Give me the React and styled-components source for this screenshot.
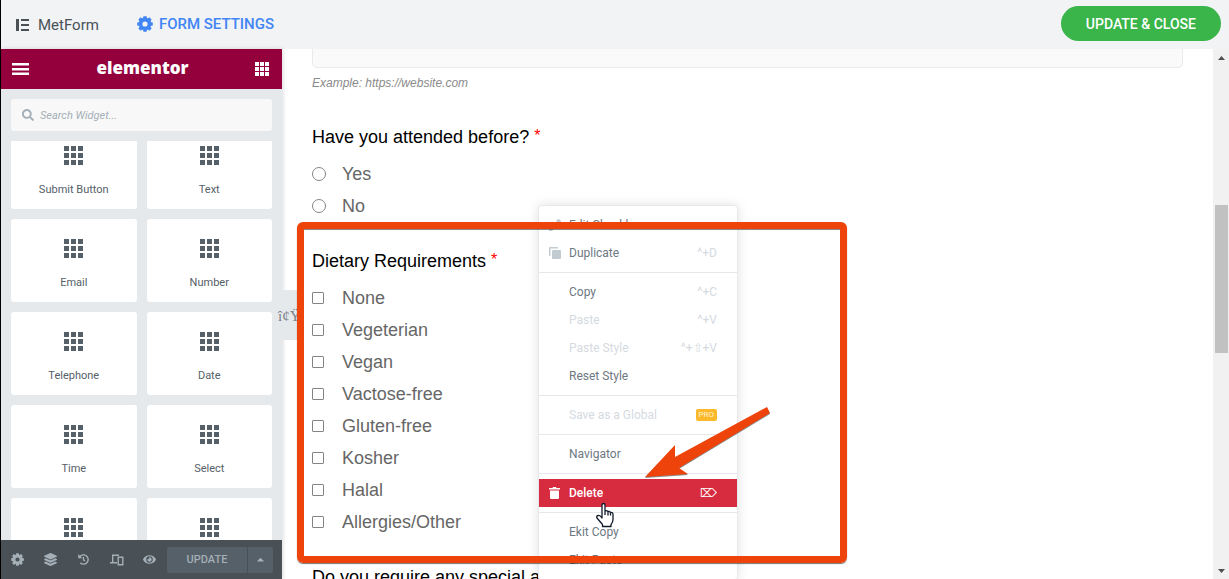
import React from "react";
import styled, { createGlobalStyle, css } from "styled-components";
import { FaHistory, FaEye, FaSearch, FaLayerGroup, FaCaretUp } from "react-icons/fa";

const GlobalStyle = createGlobalStyle`
  * { box-sizing: border-box; }
  body { margin: 0; background: #fff; }
  button, input { font: inherit; }
`;

const ui = `Roboto, "Liberation Sans", sans-serif`;

const Page = styled.div`
  position: relative;
  display: flex;
  flex-direction: column;
  height: 100vh;
  overflow: hidden;
  border-left: 1px solid #000;
  font-family: ${ui};
`;

const TopBar = styled.header`
  flex: none;
  display: flex;
  align-items: center;
  height: 49px;
  padding: 0 8px 2px 15px;
  background: #f1f3f5;
`;

const Brand = styled.div`
  display: flex;
  align-items: center;
  gap: 8px;
  padding-top: 2px;
  font-size: 15px;
  line-height: 20px;
  color: #495157;
`;

const SettingsLink = styled.a`
  display: flex;
  align-items: center;
  gap: 6px;
  margin-left: 38px;
  font-size: 15px;
  line-height: 20px;
  font-weight: 500;
  color: #4285f4;
  text-decoration: none;
`;

const CloseButton = styled.button`
  margin-left: auto;
  height: 35px;
  padding: 0 25px;
  border: 0;
  border-radius: 18px;
  background: #39b54a;
  color: #fff;
  font-size: 14px;
  font-weight: 500;
`;

const Workspace = styled.div`
  flex: 1;
  display: flex;
  min-height: 0;
`;

const Panel = styled.aside`
  position: relative;
  z-index: 1;
  flex: none;
  display: flex;
  flex-direction: column;
  width: 281px;
  background: #e6e9ec;
  box-shadow: 1px 0 4px rgba(0, 0, 0, 0.15);
`;

const PanelHeader = styled.div`
  flex: none;
  display: flex;
  align-items: center;
  justify-content: space-between;
  height: 40px;
  padding: 0 13px 0 11px;
  background: #93003c;
`;

const Logo = styled.span`
  color: #fff;
  font-family: "Open Sans", "Noto Sans", sans-serif;
  font-size: 17px;
  line-height: 24px;
  padding-bottom: 2px;
  font-weight: 800;
`;

const IconButton = styled.button`
  display: flex;
  align-items: center;
  justify-content: center;
  padding: 0;
  border: 0;
  background: none;
  color: ${(p) => p.$color || "#fff"};
`;

const SearchBox = styled.label`
  flex: none;
  display: flex;
  align-items: center;
  gap: 6px;
  height: 32px;
  margin: 10px;
  padding: 0 11px;
  border-radius: 3px;
  background: #f8f8f8;
  color: #a4afb7;
  font-size: 12px;
`;

const SearchInput = styled.input`
  flex: 1;
  min-width: 0;
  padding: 0;
  border: 0;
  outline: 0;
  background: none;
  font-size: 11px;
  font-style: italic;
  &::placeholder { color: #a4afb7; opacity: 1; }
`;

const WidgetScroll = styled.div`
  flex: 1;
  min-height: 0;
  overflow: hidden;
  padding: 0 10px;
`;

const WidgetGrid = styled.div`
  display: grid;
  grid-template-columns: 1fr 1fr;
  gap: 10px;
  margin-top: -15px;
`;

const Widget = styled.button`
  display: flex;
  flex-direction: column;
  align-items: center;
  gap: 18px;
  height: 83px;
  padding: 20px 0 0;
  border: 0;
  border-radius: 3px;
  background: #fff;
  color: #556068;
  font-size: 11px;
  line-height: 14px;
`;

const PanelFooter = styled.div`
  flex: none;
  display: flex;
  align-items: center;
  height: 39px;
  padding-right: 9px;
  background: #495157;
`;

const FooterButton = styled(IconButton)`
  width: 33px;
  height: 39px;
  font-size: 12px;
`;

const UpdateButton = styled.button`
  flex: ${(p) => (p.$narrow ? "0 0 25px" : "1")};
  display: flex;
  align-items: center;
  justify-content: center;
  height: 26px;
  margin-left: 1px;
  padding: 0;
  border: 0;
  border-radius: ${(p) => (p.$narrow ? "0 2px 2px 0" : "2px 0 0 2px")};
  background: #556068;
  color: #a4afb7;
  font-size: 11px;
  font-weight: 500;
`;

const Toggle = styled.button`
  position: absolute;
  top: 241px;
  left: 275px;
  width: 24px;
  height: 50px;
  padding: 2px 2px 0;
  border: 0;
  border-radius: 0 3px 3px 0;
  background: #e6e9ec;
  color: #7a8087;
  font-family: "Liberation Serif", serif;
  font-size: 15px;
  white-space: nowrap;
`;

const Preview = styled.main`
  position: relative;
  flex: 1;
  min-width: 0;
  overflow: hidden;
  padding: 0 30px;
  font-family: "Liberation Sans", Arial, sans-serif;
`;

const UrlInput = styled.input`
  display: block;
  width: 100%;
  height: 40px;
  margin-top: -21px;
  border: 1px solid #eaeaea;
  border-radius: 5px;
  background: #fafafa;
`;

const Hint = styled.p`
  margin: 6px 0 29px;
  color: #8a8a8a;
  font-size: 12px;
  line-height: 18px;
  font-style: italic;
`;

const Question = styled.fieldset`
  min-width: 0;
  margin: 0 0 23px;
  padding: 0;
  border: 0;
`;

const Legend = styled.legend`
  margin-bottom: 5px;
  padding: 0;
  color: #000;
  font-size: 18px;
  line-height: 32px;
`;

const Required = styled.span`
  color: #f00;
  font-size: 16px;
  line-height: 16px;
  vertical-align: 2px;
`;

const Option = styled.label`
  display: flex;
  align-items: center;
  height: 32px;
  color: #666;
  font-size: 18px;
`;

const OptionText = styled.span`
  padding-left: 16px;
`;

const Choice = styled.input`
  appearance: none;
  flex: none;
  width: 14px;
  height: 14px;
  margin: 0;
  border: 1px solid #858585;
  border-radius: 50%;
  background: #fff;
  ${(p) =>
    p.type === "checkbox" &&
    css`
      width: 12px;
      height: 12px;
      margin-right: 2px;
      border-radius: 1px;
    `}
`;

const ScrollTrack = styled.div`
  flex: none;
  display: flex;
  flex-direction: column;
  align-items: center;
  justify-content: space-between;
  width: 16px;
  padding: 7px 0 6px;
  background: #f1f1f1;
  line-height: 0;
`;

const ScrollThumb = styled.div`
  width: 13px;
  height: 148px;
  margin-bottom: 72px;
  background: #c1c1c1;
`;

const Menu = styled.div`
  position: absolute;
  top: 156px;
  left: 256px;
  width: 200px;
  border: 1px solid #e6e9ec;
  border-radius: 3px;
  background: #fff;
  box-shadow: 0 0 12px rgba(0, 0, 0, 0.12);
  font-family: ${ui};
`;

const MenuGroup = styled.div`
  padding: 5px 0;
  & + & { border-top: 1px solid #e6e9ec; }
`;

const MenuItem = styled.button`
  display: flex;
  align-items: center;
  width: 100%;
  height: 28px;
  padding: 0 20px 0 10px;
  border: 0;
  background: ${(p) => (p.$danger ? "#d72b3f" : "none")};
  color: ${(p) => (p.$danger ? "#fff" : p.disabled ? "#d5dadf" : "#6d7882")};
  font-size: 12px;
  font-weight: ${(p) => (p.$danger ? 500 : 400)};
`;

const MenuIcon = styled.span`
  display: flex;
  width: 20px;
  color: ${(p) => (p.$danger ? "#fff" : "#c2cbd2")};
`;

const Shortcut = styled.span`
  margin-left: auto;
  color: ${(p) => (p.$danger ? "#fff" : "#d5dadf")};
  font-weight: 400;
`;

const ProBadge = styled.span`
  margin-left: auto;
  padding: 0 3px;
  border-radius: 2px;
  background: #fcb92c;
  color: #fff3d0;
  font-size: 8px;
  line-height: 12px;
`;

const Highlight = styled.div`
  position: absolute;
  z-index: 3;
  top: 222px;
  left: 296px;
  width: 550px;
  height: 341px;
  border: 7px solid #ee430b;
  border-radius: 6px;
  box-shadow: 0 1px 1px rgba(60, 60, 60, 0.7), inset 0 1px 0 rgba(60, 60, 60, 0.6);
  pointer-events: none;
`;

const Arrow = styled.svg`
  position: absolute;
  z-index: 4;
  top: 400px;
  left: 640px;
  filter: drop-shadow(0 1px 0 rgba(60, 60, 60, 0.6));
  pointer-events: none;
`;

const Pointer = styled.svg`
  position: absolute;
  z-index: 5;
  top: 502px;
  left: 594px;
  pointer-events: none;
`;

const Gear = ({ size }) => (
  <svg width={size} height={size} viewBox="0 0 16 16" fill="currentColor" aria-hidden="true">
    <circle cx="8" cy="8" r="4.4" fill="none" stroke="currentColor" strokeWidth="3.6" />
    {[0, 45, 90, 135, 180, 225, 270, 315].map((a) => (
      <path key={a} d="M6.4 0.2h3.2l0.5 2.8h-4.2z" transform={`rotate(${a} 8 8)`} />
    ))}
  </svg>
);

const Dots = ({ size, cell, step }) => (
  <svg width={size} height={size} fill="currentColor" aria-hidden="true">
    {[0, 1, 2].flatMap((r) =>
      [0, 1, 2].map((c) => <rect key={`${r}${c}`} x={c * step} y={r * step} width={cell} height={cell} />)
    )}
  </svg>
);

const Devices = () => (
  <svg width="14" height="12" viewBox="0 0 14 12" fill="none" stroke="currentColor" strokeWidth="1.4" aria-hidden="true">
    <path d="M2.7 8V1.200H9M0 8.800h7M8.200 3.200h4.600v7.600H8.200z" />
  </svg>
);

const Duplicate = () => (
  <svg width="12" height="12" fill="currentColor" aria-hidden="true">
    <path d="M0 1q0-1 1-1h7q1 0 1 1v0.500H1.500V9H1q-1 0-1-1zM4 3h7q1 0 1 1v7q0 1-1 1H4q-1 0-1-1V4q0-1 1-1z" />
  </svg>
);

const Pencil = () => (
  <svg width="12" height="12" fill="currentColor" aria-hidden="true">
    <path d="M0 12V9l6-6 3 3-6 6zM7 2l1.500-1.500q1-1 2 0l1 1q1 1 0 2L10 5z" />
  </svg>
);

const Trash = () => (
  <svg width="11" height="13" fill="currentColor" aria-hidden="true">
    <path d="M0 1h3.500l0.500-1h3l0.500 1H11v1.500H0zM1 3.500h9v7.500q0 1-1 1H2q-1 0-1-1z" />
  </svg>
);

const ScrollArrow = ({ down }) => (
  <svg width="7" height="4" fill="#505050" aria-hidden="true">
    <path d={down ? "M0 0h7L3.500 4z" : "M0 4h7L3.500 0z"} />
  </svg>
);

const widgets = [
  { name: "Submit Button" },
  { name: "Text" },
  { name: "Email" },
  { name: "Number" },
  { name: "Telephone" },
  { name: "Date" },
  { name: "Time" },
  { name: "Select" },
  { name: "Multi Select", iconOnly: true },
  { name: "Textarea", iconOnly: true },
];

const questions = [
  { title: "Have you attended before?", type: "radio", options: ["Yes", "No"] },
  {
    title: "Dietary Requirements",
    type: "checkbox",
    options: ["None", "Vegeterian", "Vegan", "Vactose-free", "Gluten-free", "Kosher", "Halal", "Allergies/Other"],
  },
  { title: "Do you require any special assistance?", type: "radio", options: [] },
];

const menu = [
  [
    { label: "Edit Checkbox", icon: <Pencil /> },
    { label: "Duplicate", icon: <Duplicate />, keys: "^+D" },
  ],
  [
    { label: "Copy", keys: "^+C" },
    { label: "Paste", keys: "^+V", off: true },
    { label: "Paste Style", keys: "^+⇧+V", off: true },
    { label: "Reset Style" },
  ],
  [{ label: "Save as a Global", pro: true, off: true }],
  [{ label: "Navigator" }],
  [{ label: "Delete", icon: <Trash />, keys: "⌦", danger: true }],
  [{ label: "Ekit Copy" }, { label: "Ekit Paste" }],
];

const footerTools = [
  ["Settings", <Gear size={13} />],
  ["Navigator", <FaLayerGroup size={13} />],
  ["History", <FaHistory size={11} />],
  ["Responsive Mode", <Devices />],
  ["Preview Changes", <FaEye size={13} />],
];

export default function App() {
  return (
    <Page>
      <GlobalStyle />
      <TopBar>
        <Brand>
          <svg width="14" height="12" fill="currentColor" aria-hidden="true">
            <path d="M0 0h3v12H0zM5 0h8v2H5zM5 5h8v2H5zM5 10h8v2H5z" />
          </svg>
          MetForm
        </Brand>
        <SettingsLink href="#settings">
          <Gear size={16} />
          FORM SETTINGS
        </SettingsLink>
        <CloseButton>UPDATE &amp; CLOSE</CloseButton>
      </TopBar>
      <Workspace>
        <Panel>
          <PanelHeader>
            <IconButton aria-label="Menu">
              <svg width="18" height="12" fill="currentColor" aria-hidden="true">
                <path d="M0 0h17v2.500H0zM0 5h17v2.500H0zM0 9.500h17V12H0z" />
              </svg>
            </IconButton>
            <Logo>elementor</Logo>
            <IconButton aria-label="Widgets">
              <Dots size={14} cell={4} step={5} />
            </IconButton>
          </PanelHeader>
          <SearchBox>
            <FaSearch aria-hidden="true" />
            <SearchInput type="search" placeholder="Search Widget..." aria-label="Search Widget" />
          </SearchBox>
          <WidgetScroll>
            <WidgetGrid>
              {widgets.map((w) => (
                <Widget key={w.name} aria-label={w.name}>
                  <Dots size={19} cell={5} step={7} />
                  {!w.iconOnly && w.name}
                </Widget>
              ))}
            </WidgetGrid>
          </WidgetScroll>
          <PanelFooter>
            {footerTools.map(([name, icon]) => (
              <FooterButton key={name} $color="#a4afb7" aria-label={name}>
                {icon}
              </FooterButton>
            ))}
            <UpdateButton>UPDATE</UpdateButton>
            <UpdateButton $narrow aria-label="Save options">
              <FaCaretUp />
            </UpdateButton>
          </PanelFooter>
          <Toggle>î¢Ÿ</Toggle>
        </Panel>
        <Preview>
          <UrlInput type="url" aria-label="Website" />
          <Hint>Example: https://website.com</Hint>
          {questions.map((q) => (
            <Question key={q.title}>
              <Legend>
                {q.title} <Required>*</Required>
              </Legend>
              {q.options.map((o) => (
                <Option key={o}>
                  <Choice type={q.type} name={q.title} />
                  <OptionText>{o}</OptionText>
                </Option>
              ))}
            </Question>
          ))}
          <Menu>
            {menu.map((group, i) => (
              <MenuGroup key={i}>
                {group.map((m) => (
                  <MenuItem key={m.label} $danger={m.danger} disabled={m.off}>
                    <MenuIcon $danger={m.danger}>{m.icon}</MenuIcon>
                    {m.label}
                    {m.keys && <Shortcut $danger={m.danger}>{m.keys}</Shortcut>}
                    {m.pro && <ProBadge>PRO</ProBadge>}
                  </MenuItem>
                ))}
              </MenuGroup>
            ))}
          </Menu>
        </Preview>
        <ScrollTrack>
          <ScrollArrow />
          <ScrollThumb />
          <ScrollArrow down />
        </ScrollTrack>
      </Workspace>
      <Highlight />
      <Arrow width="132" height="82" aria-hidden="true">
        <path d="M4 77L34 45v12L126 7l3 6L38 68l9 6z" fill="#ee430b" />
      </Arrow>
      <Pointer width="20" height="26" aria-hidden="true">
        <path
          d="M7 15V3q0-1.500 1.500-1.500T10 3v6q1.500-1 3 0.500q1.500-0.500 2.500 1q2.500-0.500 2.500 2v5q0 3-2 5v2H7.500v-2L2 16q-1-2 1-2.500t4 2.500zM10 9v4M13 9.500v4M15.500 10.500v3"
          fill="#fff"
          stroke="#10182a"
          strokeWidth="1.300"
          strokeLinejoin="round"
        />
      </Pointer>
    </Page>
  );
}
